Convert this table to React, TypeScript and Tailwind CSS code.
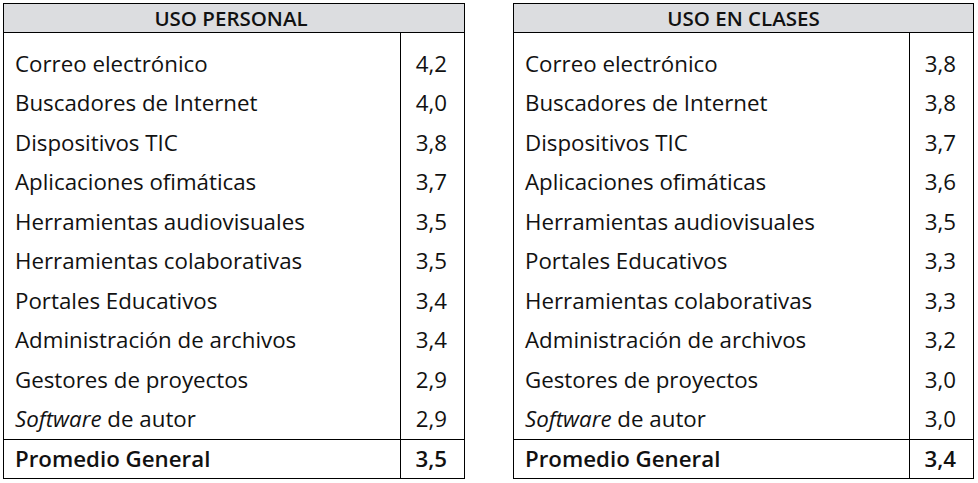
import React from "react";

type Row = { label: React.ReactNode; value: string };

const personal: Row[] = [
  { label: "Correo electrónico", value: "4,2" },
  { label: "Buscadores de Internet", value: "4,0" },
  { label: "Dispositivos TIC", value: "3,8" },
  { label: "Aplicaciones ofimáticas", value: "3,7" },
  { label: "Herramientas audiovisuales", value: "3,5" },
  { label: "Herramientas colaborativas", value: "3,5" },
  { label: "Portales Educativos", value: "3,4" },
  { label: "Administración de archivos", value: "3,4" },
  { label: "Gestores de proyectos", value: "2,9" },
  { label: <span><i>Software</i> de autor</span>, value: "2,9" },
];

const clases: Row[] = [
  { label: "Correo electrónico", value: "3,8" },
  { label: "Buscadores de Internet", value: "3,8" },
  { label: "Dispositivos TIC", value: "3,7" },
  { label: "Aplicaciones ofimáticas", value: "3,6" },
  { label: "Herramientas audiovisuales", value: "3,5" },
  { label: "Portales Educativos", value: "3,3" },
  { label: "Herramientas colaborativas", value: "3,3" },
  { label: "Administración de archivos", value: "3,2" },
  { label: "Gestores de proyectos", value: "3,0" },
  { label: <span><i>Software</i> de autor</span>, value: "3,0" },
];

function Table({ title, rows, avg, width, headPad }: { title: string; rows: Row[]; avg: string; width: string; headPad: string }) {
  return (
    <div className={`${width} border border-black flex flex-col`}>
      <div className={`h-[29px] bg-[#dcdde0] border-b border-black flex items-center justify-center font-semibold text-[20.5px] leading-none ${headPad}`}>
        {title}
      </div>
      <div className="flex">
        <div className="flex-1 pt-[11px]">
          {rows.map((r, i) => (
            <div key={i} className="h-[39.5px] flex items-center pl-[11px]">{r.label}</div>
          ))}
        </div>
        <div className="w-[64px] border-l border-black pt-[11px]">
          {rows.map((r, i) => (
            <div key={i} className="h-[39.5px] flex items-center justify-end pr-[17px]">{r.value}</div>
          ))}
        </div>
      </div>
      <div className="flex border-t border-black h-[39px] font-semibold">
        <div className="flex-1 flex items-center pl-[11px]">Promedio General</div>
        <div className="w-[64px] border-l border-black flex items-center justify-end pr-[17px]">{avg}</div>
      </div>
    </div>
  );
}

export default function App() {
  return (
    <div
      className="w-[978px] h-[483px] bg-white text-[#111] text-[22.3px] leading-none flex items-start pl-[3px] pt-[3px] gap-[48px]"
      style={{ fontFamily: '"Open Sans", "Noto Sans", sans-serif' }}
    >
      <Table title="USO PERSONAL" rows={personal} avg="3,5" width="w-[462px]" headPad="pr-[6px]" />
      <Table title="USO EN CLASES" rows={clases} avg="3,4" width="w-[461px]" headPad="" />
    </div>
  );
}
